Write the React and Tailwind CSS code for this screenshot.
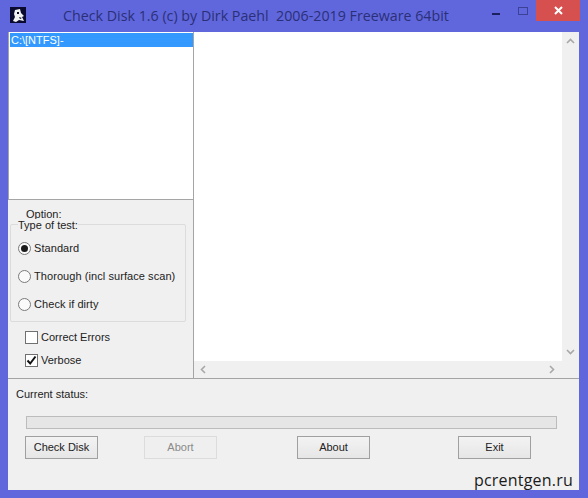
import React from "react";

const tahoma = "font-['Liberation_Sans',Arial,sans-serif] text-[11px] text-[#222]";

const Radio = ({ label, checked }) => (
  <div className="flex items-center h-[13px] gap-[3px]">
    <span className="w-[13px] h-[13px] rounded-full border border-[#7a7a7a] bg-[#fafafa] flex items-center justify-center">
      {checked && <span className="w-[7px] h-[7px] rounded-full bg-[#1a1a1a]" />}
    </span>
    <span className="tracking-[0.07px]">{label}</span>
  </div>
);

const Check = ({ label, checked }) => (
  <div className="flex items-center h-[13px] gap-[3px]">
    <span className="w-[13px] h-[13px] border border-[#707070] bg-white flex items-center justify-center">
      {checked && (
        <svg width="11" height="11" viewBox="0 0 11 11">
          <path d="M1.5 5.5 L4.2 8.5 L9.5 1.5" fill="none" stroke="#111" strokeWidth="2" />
        </svg>
      )}
    </span>
    <span>{label}</span>
  </div>
);

const Btn = ({ label, disabled }) => (
  <button
    className={`w-[73px] h-[23px] border text-center ${
      disabled
        ? "border-[#dcdcdc] text-[#8a8a8a] bg-[#efefef]"
        : "border-[#a0a0a0] bg-gradient-to-b from-[#f3f3f3] to-[#e6e6e6] text-[#222]"
    }`}
  >
    {label}
  </button>
);

export default function App() {
  return (
    <div className={`w-[588px] h-[498px] bg-[#6067dc] relative overflow-hidden flex flex-col ${tahoma}`}>
      {/* Title bar */}
      <div className="h-[32px] flex shrink-0">
        <div className="w-[16px] h-[16px] mt-[7px] ml-[10px] bg-[#0a0a30] flex items-center justify-center">
          <svg width="15" height="15" viewBox="0 0 15 15">
            <path d="M4 2 L9 1 L10 5 L13 8 L11 9 L13 13 L8 12 L5 14 L2 13 L4 9 L3 6 Z" fill="#f2f2f2" />
            <path d="M6 4 L8 4 L8 6 L6 6 Z M8 9 L11 10 L9 11 Z" fill="#0a0a30" />
          </svg>
        </div>
        <div className="ml-[37px] mt-[6px] font-['Open_Sans',sans-serif] text-[14.25px] leading-[20px] text-[#2b2f78] whitespace-pre">
          Check Disk 1.6 (c) by Dirk Paehl  2006-2019 Freeware 64bit
        </div>
        <div className="flex ml-auto mr-[8px]">
          <span className="block w-[8px] h-[2px] mt-[13px] mr-[18px] bg-[#1c2060]" />
          <span className="block w-[10px] h-[8px] mt-[7px] mr-[8px] border border-[#3c4196]" />
          <div className="w-[44px] h-[21px] bg-[#d75050] flex items-center justify-center">
            <svg width="9" height="9" viewBox="0 0 9 9">
              <path d="M1 1 L8 8 M8 1 L1 8" stroke="#fff" strokeWidth="2" />
            </svg>
          </div>
        </div>
      </div>

      {/* Client area */}
      <div className="ml-[8px] w-[571px] h-[458px] bg-[#f0f0f0] flex flex-col">
        <div className="flex h-[347px] border-b border-[#a5a5a5]">
          {/* Left column */}
          <div className="w-[186px] flex flex-col border-r border-[#a5a5a5]">
            <div className="h-[168px] bg-white border-b border-l border-[#a5a5a5] pt-px pl-px">
              <div className="h-[14px] bg-[#3399ff] text-white leading-[14px] pl-[1px]">C:\[NTFS]-</div>
            </div>
            <div className="flex-1 flex flex-col">
              <div className="pl-[18px] pt-[8px] leading-[12px]">Option:</div>
              <div className="ml-[2px] mt-[4px] w-[176px] h-[98px] border border-[#dcdcdc] rounded-[2px] px-[7px] flex flex-col">
                <div className="-mt-[6px] h-[12px] leading-[12px] bg-[#f0f0f0] w-fit">Type of test:</div>
                <div className="flex flex-col gap-[15px] mt-[11px]">
                  <Radio label="Standard" checked />
                  <Radio label="Thorough (incl surface scan)" />
                  <Radio label="Check if dirty" />
                </div>
              </div>
              <div className="pl-[17px] mt-[9px] flex flex-col gap-[10px]">
                <Check label="Correct Errors" />
                <Check label="Verbose" checked />
              </div>
            </div>
          </div>

          {/* Output box with scrollbars */}
          <div className="flex-1 flex flex-col">
            <div className="flex-1 flex bg-white">
              <div className="flex-1" />
              <div className="w-[17px] bg-[#f0f0f0] flex flex-col items-center justify-between py-[6px]">
                <svg width="9" height="6" viewBox="0 0 9 6">
                  <path d="M1 5 L4.5 1.5 L8 5" fill="none" stroke="#a8a8a8" strokeWidth="1.6" />
                </svg>
                <svg width="9" height="6" viewBox="0 0 9 6">
                  <path d="M1 1 L4.5 4.5 L8 1" fill="none" stroke="#a8a8a8" strokeWidth="1.6" />
                </svg>
              </div>
            </div>
            <div className="h-[17px] flex items-center justify-between pl-[6px] pr-[24px]">
              <svg width="6" height="9" viewBox="0 0 6 9">
                <path d="M5 1 L1.5 4.5 L5 8" fill="none" stroke="#a8a8a8" strokeWidth="1.6" />
              </svg>
              <svg width="6" height="9" viewBox="0 0 6 9">
                <path d="M1 1 L4.5 4.5 L1 8" fill="none" stroke="#a8a8a8" strokeWidth="1.6" />
              </svg>
            </div>
          </div>
        </div>

        {/* Bottom panel */}
        <div className="flex-1 flex flex-col">
          <div className="pl-[8px] pt-[9px] leading-[13px]">Current status:</div>
          <div className="ml-[18px] mt-[15px] w-[531px] h-[13px] bg-[#e6e6e6] border border-[#bcbcbc]" />
          <div className="ml-[17px] mt-[7px] flex">
            <Btn label="Check Disk" />
            <div className="ml-[46px]"><Btn label="Abort" disabled /></div>
            <div className="ml-[80px]"><Btn label="About" /></div>
            <div className="ml-[88px]"><Btn label="Exit" /></div>
          </div>
        </div>
      </div>

      {/* Watermark */}
      <div className="absolute left-[474px] top-[470px] font-['Open_Sans',sans-serif] text-[16px] leading-[20px] text-[#1a1a1a] tracking-[0.2px]">
        pcrentgen.ru
      </div>
    </div>
  );
}
